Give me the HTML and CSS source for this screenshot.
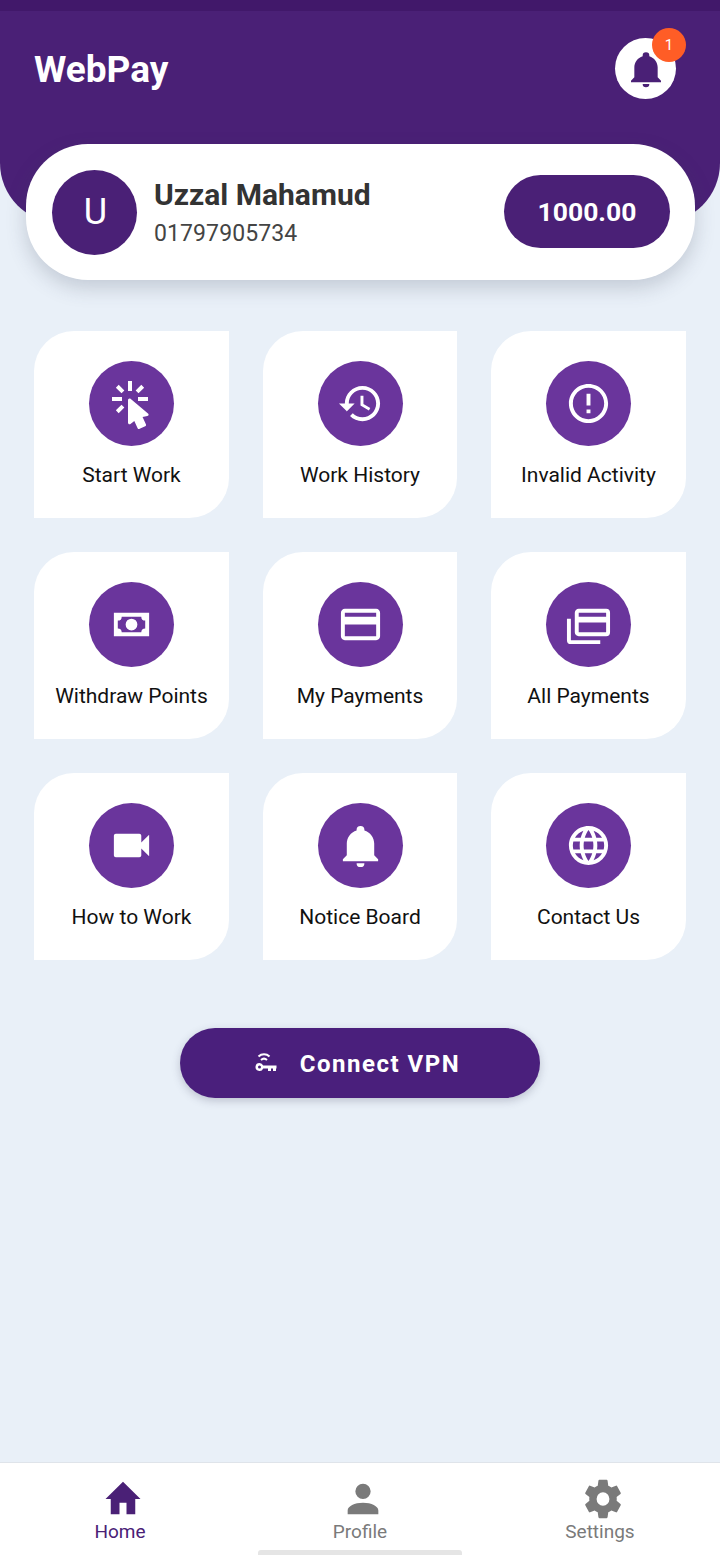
FILE: index.html
```html
<!DOCTYPE html>
<html lang="en">
<head>
<meta charset="utf-8">
<title>WebPay</title>
<link rel="stylesheet" href="styles.css">
</head>
<body>
<div class="app">
  <header class="header">
    <h1 class="brand">WebPay</h1>
    <div class="bell">
      <svg class="bell-icon" viewBox="0 0 24 24"><path d="M21,19V20H3V19L5,17V11C5,7.9 7.03,5.17 10,4.29C10,4.19 10,4.1 10,4A2,2 0 0,1 12,2A2,2 0 0,1 14,4C14,4.1 14,4.19 14,4.29C16.97,5.17 19,7.9 19,11V17L21,19M14,21A2,2 0 0,1 12,23A2,2 0 0,1 10,21"/></svg>
      <span class="badge">1</span>
    </div>
  </header>

  <section class="profile">
    <div class="avatar">U</div>
    <div class="who">
      <div class="name">Uzzal Mahamud</div>
      <div class="phone">01797905734</div>
    </div>
    <div class="balance">1000.00</div>
  </section>

  <main class="grid">
    <a class="tile"><span class="disc"><svg viewBox="0 0 24 24" class="ico ico-click"><path d="M10.76,8.69A0.76,0.76 0 0,0 10,9.45V20.9C10,21.32 10.34,21.66 10.76,21.66C10.95,21.66 11.11,21.6 11.24,21.5L13.15,19.95L14.81,23.57C14.94,23.84 15.21,24 15.5,24C15.61,24 15.72,24 15.83,23.92L18.59,22.64C18.97,22.46 19.15,22 18.95,21.63L17.28,18L19.69,17.55C19.85,17.5 20,17.43 20.12,17.29C20.39,16.97 20.35,16.5 20,16.21L11.26,8.86L11.25,8.87C11.12,8.76 10.95,8.69 10.76,8.69M15,10V8H20V10H15M13.83,4.76L16.66,1.93L18.07,3.34L15.24,6.17L13.83,4.76M10,0H12V5H10V0M3.93,14.66L6.76,11.83L8.17,13.24L5.34,16.07L3.93,14.66M3.93,3.34L5.34,1.93L8.17,4.76L6.76,6.17L3.93,3.34M7,10H2V8H7V10"/></svg></span><span class="label">Start Work</span></a>
    <a class="tile"><span class="disc"><svg viewBox="0 0 24 24" class="ico"><path d="M13 3c-4.97 0-9 4.03-9 9H1l3.89 3.89.07.14L9 12H6c0-3.87 3.13-7 7-7s7 3.13 7 7-3.13 7-7 7c-1.93 0-3.68-.79-4.94-2.06l-1.42 1.42C8.27 19.99 10.51 21 13 21c4.97 0 9-4.03 9-9s-4.03-9-9-9zm-1 5v5l4.28 2.54.72-1.21-3.5-2.08V8H12z"/></svg></span><span class="label">Work History</span></a>
    <a class="tile"><span class="disc"><svg viewBox="0 0 24 24" class="ico"><path d="M11 15h2v2h-2zm0-8h2v6h-2zm.99-5C6.47 2 2 6.48 2 12s4.47 10 9.99 10C17.52 22 22 17.52 22 12S17.52 2 11.99 2zM12 20c-4.42 0-8-3.58-8-8s3.58-8 8-8 8 3.58 8 8-3.58 8-8 8z"/></svg></span><span class="label">Invalid Activity</span></a>

    <a class="tile"><span class="disc"><svg viewBox="0 0 24 24" class="ico"><path d="M3,6H21V18H3V6M12,9A3,3 0 0,1 15,12A3,3 0 0,1 12,15A3,3 0 0,1 9,12A3,3 0 0,1 12,9M7,8A2,2 0 0,1 5,10V14A2,2 0 0,1 7,16H17A2,2 0 0,1 19,14V10A2,2 0 0,1 17,8H7Z"/></svg></span><span class="label">Withdraw Points</span></a>
    <a class="tile"><span class="disc"><svg viewBox="0 0 24 24" class="ico"><path d="M20 4H4c-1.11 0-1.99.89-1.99 2L2 18c0 1.11.89 2 2 2h16c1.11 0 2-.89 2-2V6c0-1.11-.89-2-2-2zm0 14H4v-6h16v6zm0-10H4V6h16v2z"/></svg></span><span class="label">My Payments</span></a>
    <a class="tile"><span class="disc"><svg viewBox="0 0 24 24" class="ico"><path d="M21,8V6H7V8H21M21,16V11H7V16H21M21,4A2,2 0 0,1 23,6V16A2,2 0 0,1 21,18H7C5.89,18 5,17.1 5,16V6C5,4.89 5.89,4 7,4H21M3,20H18V22H3A2,2 0 0,1 1,20V9H3V20Z"/></svg></span><span class="label">All Payments</span></a>

    <a class="tile"><span class="disc"><svg viewBox="0 0 24 24" class="ico"><path d="M17 10.5V7c0-.55-.45-1-1-1H4c-.55 0-1 .45-1 1v10c0 .55.45 1 1 1h12c.55 0 1-.45 1-1v-3.5l4 4v-11l-4 4z"/></svg></span><span class="label">How to Work</span></a>
    <a class="tile"><span class="disc"><svg viewBox="0 0 24 24" class="ico"><path d="M21,19V20H3V19L5,17V11C5,7.9 7.03,5.17 10,4.29C10,4.19 10,4.1 10,4A2,2 0 0,1 12,2A2,2 0 0,1 14,4C14,4.1 14,4.19 14,4.29C16.97,5.17 19,7.9 19,11V17L21,19M14,21A2,2 0 0,1 12,23A2,2 0 0,1 10,21"/></svg></span><span class="label">Notice Board</span></a>
    <a class="tile"><span class="disc"><svg viewBox="0 0 24 24" class="ico"><path d="M16.36,14C16.44,13.34 16.5,12.68 16.5,12C16.5,11.32 16.44,10.66 16.36,10H19.74C19.9,10.64 20,11.31 20,12C20,12.69 19.9,13.36 19.74,14M14.59,19.56C15.19,18.45 15.65,17.25 15.97,16H18.92C17.96,17.65 16.43,18.93 14.59,19.56M14.34,14H9.66C9.56,13.34 9.5,12.68 9.5,12C9.5,11.32 9.56,10.65 9.66,10H14.34C14.43,10.65 14.5,11.32 14.5,12C14.5,12.68 14.43,13.34 14.34,14M12,19.96C11.17,18.76 10.5,17.43 10.09,16H13.91C13.5,17.43 12.83,18.76 12,19.96M8,8H5.08C6.03,6.34 7.57,5.06 9.4,4.44C8.8,5.55 8.35,6.75 8,8M5.08,16H8C8.35,17.25 8.8,18.45 9.4,19.56C7.57,18.93 6.03,17.65 5.08,16M4.26,14C4.1,13.36 4,12.69 4,12C4,11.31 4.1,10.64 4.26,10H7.64C7.56,10.66 7.5,11.32 7.5,12C7.5,12.68 7.56,13.34 7.64,14M12,4.03C12.83,5.23 13.5,6.57 13.91,8H10.09C10.5,6.57 11.17,5.23 12,4.03M18.92,8H15.97C15.65,6.75 15.19,5.55 14.59,4.44C16.43,5.07 17.96,6.34 18.92,8M12,2C6.47,2 2,6.5 2,12A10,10 0 0,0 12,22A10,10 0 0,0 22,12A10,10 0 0,0 12,2Z"/></svg></span><span class="label">Contact Us</span></a>
  </main>

  <div class="vpn-row">
    <button class="vpn">
      <svg class="vpn-icon" viewBox="0 0 24 24"><path fill-rule="evenodd" d="M5.500 12a4 4 0 1 0 3.700 5.500H14V20h3v-2.500h2V20h3v-2.500h.5v-3H9.200A4 4 0 0 0 5.500 12zm0 2.500a1.500 1.500 0 1 1 0 3 1.500 1.500 0 0 1 0-3z"/><path class="vpn-wave" d="M4.500 5.500a8 8 0 0 1 11 0M7 9a4.500 4.500 0 0 1 6 0"/></svg>
      <span class="vpn-text">Connect VPN</span>
    </button>
  </div>

  <nav class="nav">
    <a class="nav-item active"><svg viewBox="0 0 24 24" preserveAspectRatio="none" class="nav-ico nav-home"><path d="M10,20V14H14V20H19V12H22L12,3L2,12H5V20H10Z"/></svg><span>Home</span></a>
    <a class="nav-item"><svg viewBox="0 0 24 24" class="nav-ico"><path d="M12,4A4,4 0 0,1 16,8A4,4 0 0,1 12,12A4,4 0 0,1 8,8A4,4 0 0,1 12,4M12,14C16.42,14 20,15.79 20,18V20H4V18C4,15.79 7.58,14 12,14Z"/></svg><span>Profile</span></a>
    <a class="nav-item"><svg viewBox="0 0 24 24" preserveAspectRatio="none" class="nav-ico nav-cog"><path d="M12,15.5A3.5,3.5 0 0,1 8.5,12A3.5,3.5 0 0,1 12,8.5A3.5,3.5 0 0,1 15.5,12A3.5,3.5 0 0,1 12,15.5M19.43,12.97C19.47,12.65 19.5,12.33 19.5,12C19.5,11.67 19.47,11.34 19.43,11L21.54,9.37C21.73,9.22 21.78,8.95 21.66,8.73L19.66,5.27C19.54,5.05 19.27,4.96 19.05,5.05L16.56,6.05C16.04,5.66 15.5,5.32 14.87,5.07L14.5,2.42C14.46,2.18 14.25,2 14,2H10C9.75,2 9.54,2.18 9.5,2.42L9.13,5.07C8.5,5.32 7.96,5.66 7.44,6.05L4.95,5.05C4.73,4.96 4.46,5.05 4.34,5.27L2.34,8.73C2.21,8.95 2.27,9.22 2.46,9.37L4.57,11C4.53,11.34 4.5,11.67 4.5,12C4.5,12.33 4.53,12.65 4.57,12.97L2.46,14.63C2.27,14.78 2.21,15.05 2.34,15.27L4.34,18.73C4.46,18.95 4.73,19.03 4.95,18.95L7.44,17.94C7.96,18.34 8.5,18.68 9.13,18.93L9.5,21.58C9.54,21.82 9.75,22 10,22H14C14.25,22 14.46,21.82 14.5,21.58L14.87,18.93C15.5,18.67 16.04,18.34 16.56,17.94L19.05,18.95C19.27,19.03 19.54,18.95 19.66,18.73L21.66,15.27C21.78,15.05 21.73,14.78 21.54,14.63L19.43,12.97Z"/></svg><span>Settings</span></a>
    <div class="home-bar"></div>
  </nav>
</div>
</body>
</html>
```

FILE: styles.css
```css
* { box-sizing: border-box; }
html, body { margin: 0; padding: 0; }
body { font-family: Roboto, "Liberation Sans", sans-serif; background: #e9f0f8; }

.app {
  width: 720px;
  height: 1555px;
  display: flex;
  flex-direction: column;
  overflow: hidden;
  background: #e9f0f8;
}

.header {
  height: 223px;
  flex: none;
  border-top: 11px solid #41186a;
  background: #4a2076;
  border-radius: 0 0 60px 60px;
  padding: 27px 34px 0 34px;
  display: flex;
  justify-content: space-between;
  align-items: flex-start;
}
.brand {
  margin: 11px 0 0;
  font-size: 37px;
  line-height: 42px;
  font-weight: 700;
  color: #fff;
}
.bell {
  position: relative;
  width: 61px;
  height: 61px;
  margin: 0 10px 0 0;
  background: #fff;
  border-radius: 50%;
  display: flex;
  align-items: center;
  justify-content: center;
}
.bell-icon { width: 40px; height: 40px; fill: #4a2076; }
.badge {
  position: absolute;
  top: -10px;
  right: -10px;
  width: 34px;
  height: 34px;
  border-radius: 50%;
  background: #ff5d26;
  color: #fff;
  font-size: 15px;
  display: flex;
  align-items: center;
  justify-content: center;
}

.profile {
  flex: none;
  position: relative;
  margin: -79px 25px 0 26px;
  height: 136px;
  background: #fff;
  border-radius: 62px;
  box-shadow: 0 8px 20px rgba(60, 70, 90, 0.22);
  padding: 0 25px 0 26px;
  display: flex;
  align-items: center;
}
.avatar {
  width: 85px;
  height: 85px;
  flex: none;
  border-radius: 50%;
  background: #4a2076;
  color: #fff;
  font-size: 36px;
  padding-left: 2px;
  display: flex;
  align-items: center;
  justify-content: center;
}
.who { margin-left: 17px; flex: 1; }
.name { font-size: 30px; line-height: 34px; font-weight: 700; color: #333; }
.phone { margin-top: 8px; font-size: 23px; line-height: 27px; color: #444; letter-spacing: 0.1px; }
.balance {
  width: 166px;
  height: 73px;
  margin-bottom: 2px;
  border-radius: 37px;
  background: #4a2076;
  color: #fff;
  font-size: 26.500px;
  font-weight: 700;
  display: flex;
  align-items: center;
  justify-content: center;
}

.grid {
  flex: none;
  margin-top: 51px;
  padding: 0 34px;
  display: grid;
  grid-template-columns: 195px 194px 195px;
  column-gap: 34px;
  row-gap: 34px;
}
.tile {
  height: 187px;
  background: #fff;
  border-radius: 40px 0 40px 0;
  padding-top: 30px;
  display: flex;
  flex-direction: column;
  align-items: center;
}
.disc {
  width: 85px;
  height: 85px;
  border-radius: 50%;
  background: #6a359c;
  display: flex;
  align-items: center;
  justify-content: center;
}
.ico { width: 47px; height: 47px; fill: #fff; }
.ico-click { width: 48px; height: 48px; margin-top: 2px; }
.label {
  margin-top: 17px;
  font-size: 21px;
  line-height: 25px;
  color: #111;
}

.vpn-row {
  flex: none;
  margin-top: 68px;
  display: flex;
  justify-content: center;
}
.vpn {
  width: 360px;
  height: 70px;
  border: 0;
  padding: 0 6px 0 0;
  border-radius: 35px;
  background: #4a1f7c;
  color: #fff;
  font-family: inherit;
  font-size: 24px;
  font-weight: 700;
  letter-spacing: 1.500px;
  box-shadow: 0 3px 8px rgba(60, 60, 90, 0.25);
  display: flex;
  align-items: center;
  justify-content: center;
  gap: 22px;
}
.vpn-text { margin-top: 2px; }
.vpn-icon { width: 24px; height: 24px; fill: #fff; }
.vpn-wave { fill: none; stroke: #fff; stroke-width: 2; }

.nav {
  margin-top: auto;
  position: relative;
  height: 93px;
  flex: none;
  background: #fff;
  border-top: 1px solid #dfe4ea;
  display: grid;
  grid-template-columns: repeat(3, 1fr);
}
.nav-item {
  display: flex;
  flex-direction: column;
  align-items: center;
  padding-top: 13px;
  color: #7a7a7a;
  font-size: 19px;
  line-height: 23px;
}
.nav-ico { width: 46px; height: 46px; fill: #7a7a7a; margin: 0 0 -2px 5px; }
.nav-home { width: 42px; }
.nav-cog { width: 44px; }
.nav-item.active { color: #4a2076; }
.nav-item.active .nav-ico { fill: #4a2076; }
.home-bar {
  position: absolute;
  left: 258px;
  bottom: 0;
  width: 204px;
  height: 5px;
  border-radius: 3px 3px 0 0;
  background: #e5e5e5;
}
```
